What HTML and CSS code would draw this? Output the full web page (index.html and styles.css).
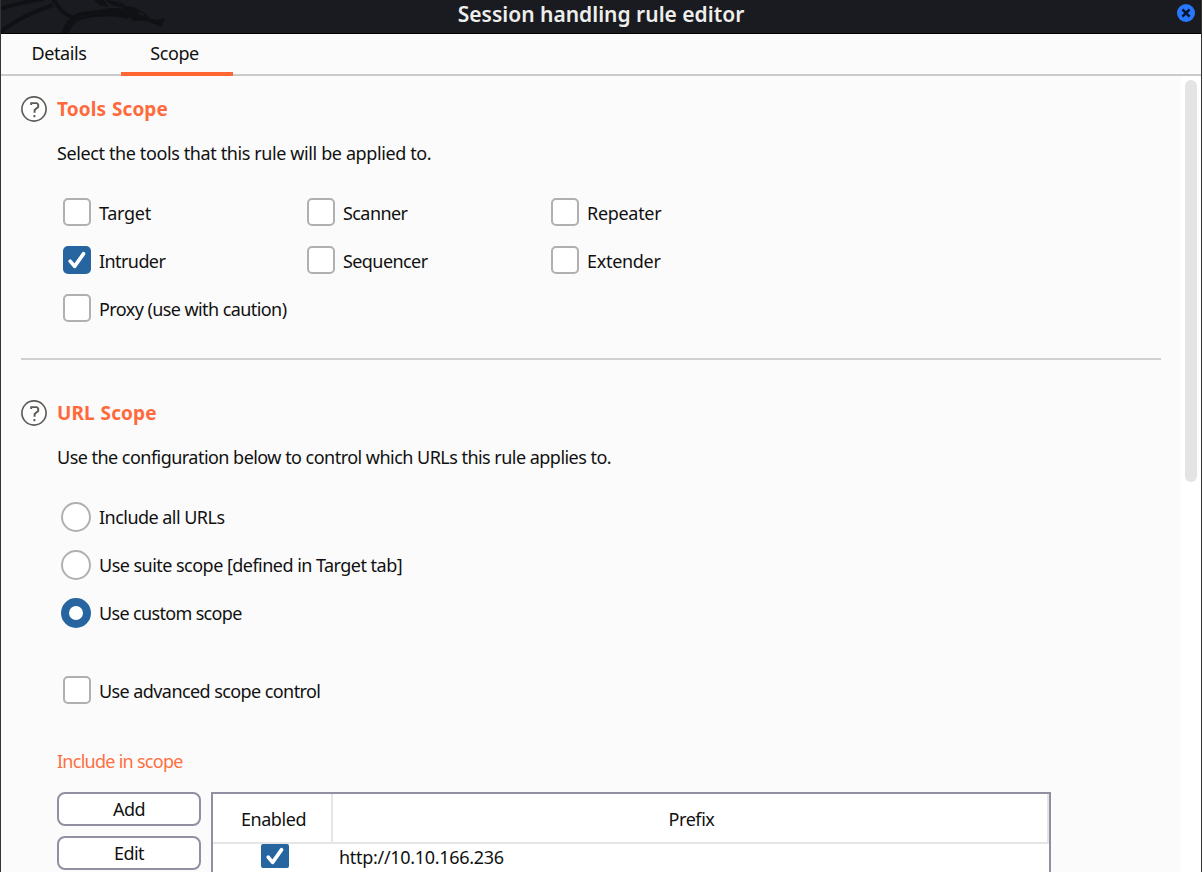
FILE: index.html
```html
<!DOCTYPE html>
<html lang="en">
<head>
<meta charset="utf-8">
<title>Session handling rule editor</title>
<link rel="stylesheet" href="styles.css">
</head>
<body>
<svg class="defs" width="0" height="0">
  <symbol id="help" viewBox="0 0 26 26">
    <circle cx="13" cy="13" r="12.1" fill="#fff" stroke="#5a5a56" stroke-width="1.6"/>
    <path d="M10.2 9V7.1H15.8L17.2 8.4V11L13.6 14V16.8M13.4 19v2.3" fill="none" stroke="#5a5a56" stroke-width="1.9"/>
  </symbol>
  <symbol id="tick" viewBox="0 0 28 28">
    <path d="M7.2 15.2L11.6 20.4L20.6 7.6" fill="none" stroke="#fff" stroke-width="3.6" stroke-linecap="round" stroke-linejoin="round"/>
  </symbol>
  <symbol id="tick-cell" viewBox="0 0 28 24">
    <path d="M7.2 13.2L11.6 18.4L20.6 5.6" fill="none" stroke="#fff" stroke-width="3.6" stroke-linecap="round" stroke-linejoin="round"/>
  </symbol>
</svg>
<div class="window">
  <header class="titlebar">
    <svg class="dragon" viewBox="1 0 180 33" width="180" height="33">
      <g fill="none" stroke="#101115" stroke-width="4">
        <path d="M0 9Q20 2 44 -1M0 32Q22 15 53 5"/>
        <path d="M53 -1Q62 14 72 17" stroke-width="4"/>
        <path d="M64 35Q69 21 80 16Q104 11 134 14" stroke-width="7"/>
      </g>
      <path d="M68 17Q88 12 104 9Q122 6 132 13L128 19Q96 11 76 22zM94 0L99 5L109 7L104 0zM105 0L112 5L124 8L115 1zM117 0L126 6L134 7L146 14L149 18L157 20L165 18L161 27L147 21L133 21L127 14z" fill="#101115"/>
      <path d="M139 13l5 2" stroke="#25262b" stroke-width="1"/>
    </svg>
    <h1 class="title">Session handling rule editor</h1>
    <button class="close" aria-label="Close"><svg viewBox="0 0 18 18" width="18" height="18"><circle cx="9" cy="9" r="9" fill="#2777ff"/><path d="M5.4 5.4l7.2 7.2M12.6 5.4l-7.2 7.2" stroke="#08142e" stroke-width="2.6"/></svg></button>
  </header>
  <nav class="tabs">
    <a class="tab">Details</a>
    <a class="tab active">Scope</a>
  </nav>
  <div class="body">
    <main class="content">
      <section class="section tools">
        <div class="heading"><svg class="help"><use href="#help"/></svg><h2>Tools Scope</h2></div>
        <p class="desc loose">Select the tools that this rule will be applied to.</p>
        <div class="tool-grid">
          <label class="option"><span class="box"></span><span class="label short">Target</span></label>
          <label class="option"><span class="box"></span><span class="label">Scanner</span></label>
          <label class="option"><span class="box"></span><span class="label short">Repeater</span></label>
          <label class="option"><span class="box on"><svg><use href="#tick"/></svg></span><span class="label">Intruder</span></label>
          <label class="option"><span class="box"></span><span class="label">Sequencer</span></label>
          <label class="option"><span class="box"></span><span class="label short">Extender</span></label>
          <label class="option"><span class="box"></span><span class="label">Proxy (use with caution)</span></label>
        </div>
      </section>
      <section class="section url">
        <div class="heading"><svg class="help"><use href="#help"/></svg><h2>URL Scope</h2></div>
        <p class="desc">Use the configuration below to control which URLs this rule applies to.</p>
        <div class="radios">
          <label class="option"><span class="radio"></span>Include all URLs</label>
          <label class="option"><span class="radio"></span>Use suite scope [defined in Target tab]</label>
          <label class="option custom"><span class="radio on"></span>Use custom scope</label>
        </div>
        <label class="option advanced"><span class="box"></span><span class="label">Use advanced scope control</span></label>
        <h3>Include in scope</h3>
        <div class="include">
          <div class="buttons"><button class="btn">Add</button><button class="btn">Edit</button></div>
          <div class="table">
            <div class="th">Enabled</div><div class="th">Prefix</div>
            <div class="td check"><span class="box on"><svg><use href="#tick-cell"/></svg></span></div><div class="td">http://10.10.166.236</div>
          </div>
        </div>
      </section>
    </main>
    <div class="scroll"><div class="thumb"></div></div>
  </div>
</div>
</body>
</html>
```
FILE: styles.css
```css
* { box-sizing: border-box; }
body { margin: 0; height: 872px; overflow: hidden; font: 18px/24px "Noto Sans", sans-serif; letter-spacing: -0.53px; color: #111; background: #333438; }
h1, h2, h3, p { margin: 0; }
.defs { display: block; height: 0; }
.window { width: 1200px; height: 872px; margin-left: 1px; display: flex; flex-direction: column; overflow: hidden; background: #fbfbfb; }
.titlebar { height: 34px; flex: none; position: relative; background: #1a1b20; border-bottom: 1px solid #000; display: flex; justify-content: center; }
.dragon { position: absolute; left: 0; top: 0; }
.title { font-size: 21px; line-height: 28px; font-weight: 600; letter-spacing: 0; color: #eeeeec; }
.close { position: absolute; right: 6px; top: 4px; width: 18px; height: 18px; padding: 0; border: 0; background: none; }
.close svg { display: block; }
.tabs { height: 42px; flex: none; display: flex; gap: 4px; border-bottom: 2px solid #cacccb; letter-spacing: -0.4px; }
.tab { height: 42px; width: 116px; text-align: center; line-height: 38px; }
.tab.active { width: 112px; padding-right: 5px; border-bottom: 4px solid #ff6633; }
.body { flex: 1; min-height: 0; display: flex; }
.content { width: 1180px; padding: 0 20px; overflow: hidden; }
.scroll { width: 20px; padding: 4px 4px 0; background: #fff; }
.thumb { width: 12px; height: 402px; border-radius: 6px; background: #e4e4e4; }
.section { width: 1140px; padding-top: 20px; }
.tools { height: 284px; border-bottom: 2px solid #d0d0d0; }
.url { padding-top: 40px; }
.heading { display: flex; gap: 10px; height: 26px; align-items: center; }
.help { width: 26px; height: 26px; flex: none; }
h2 { font-size: 19px; line-height: 26px; font-weight: 700; letter-spacing: 0.1px; word-spacing: 0.8px; color: #ff6a3c; }
.desc { padding: 19px 0 0 36px; }
.loose { letter-spacing: -0.39px; }
.option { height: 28px; display: flex; align-items: center; gap: 8px; white-space: nowrap; }
.label { padding-top: 2px; letter-spacing: -0.58px; }
.short { letter-spacing: -0.3px; }
.custom { letter-spacing: -0.66px; }
.box { width: 28px; height: 28px; flex: none; border: 2px solid #b0b0b0; border-radius: 5px; background: #fff; }
.box.on { border: 0; background: #26659f; }
.box svg { display: block; width: 28px; height: 100%; }
.radio { width: 30px; height: 30px; flex: none; border: 2px solid #b0b0b0; border-radius: 50%; background: #fff; }
.radio.on { border: 8px solid #26659f; }
.tool-grid { margin: 33px 0 0 42px; display: grid; grid-template-columns: repeat(3, 244px); grid-auto-rows: 28px; row-gap: 20px; }
.radios { margin: 33px 0 0 40px; display: grid; gap: 18px; }
.radios .option { height: 30px; }
.advanced { margin: 48px 0 0 42px; }
h3 { margin: 45px 0 0 36px; font-weight: 400; letter-spacing: -0.73px; color: #ff6f42; font-size: 18px; line-height: 24px; }
.include { margin: 19px 0 0 36px; display: flex; gap: 10px; }
.buttons { width: 144px; display: grid; gap: 10px; align-content: start; }
.btn { height: 34px; padding: 0; border: 2px solid #9190a3; border-radius: 8px; background: #fff; font: inherit; letter-spacing: -0.5px; color: #111; }
.table { width: 840px; height: 120px; border: 2px solid #9190a3; background: #fff; display: grid; grid-template-columns: 120px 716px; grid-template-rows: 50px 28px; }
.th { border-right: 2px solid #e5e5e5; border-bottom: 2px solid #e5e5e5; text-align: center; line-height: 50px; padding-left: 3px; letter-spacing: -0.42px; }
.td { padding-left: 6px; line-height: 26px; letter-spacing: -0.3px; }
.check { padding-left: 48px; }
.check .box { display: block; height: 24px; border-radius: 2px; }
```
